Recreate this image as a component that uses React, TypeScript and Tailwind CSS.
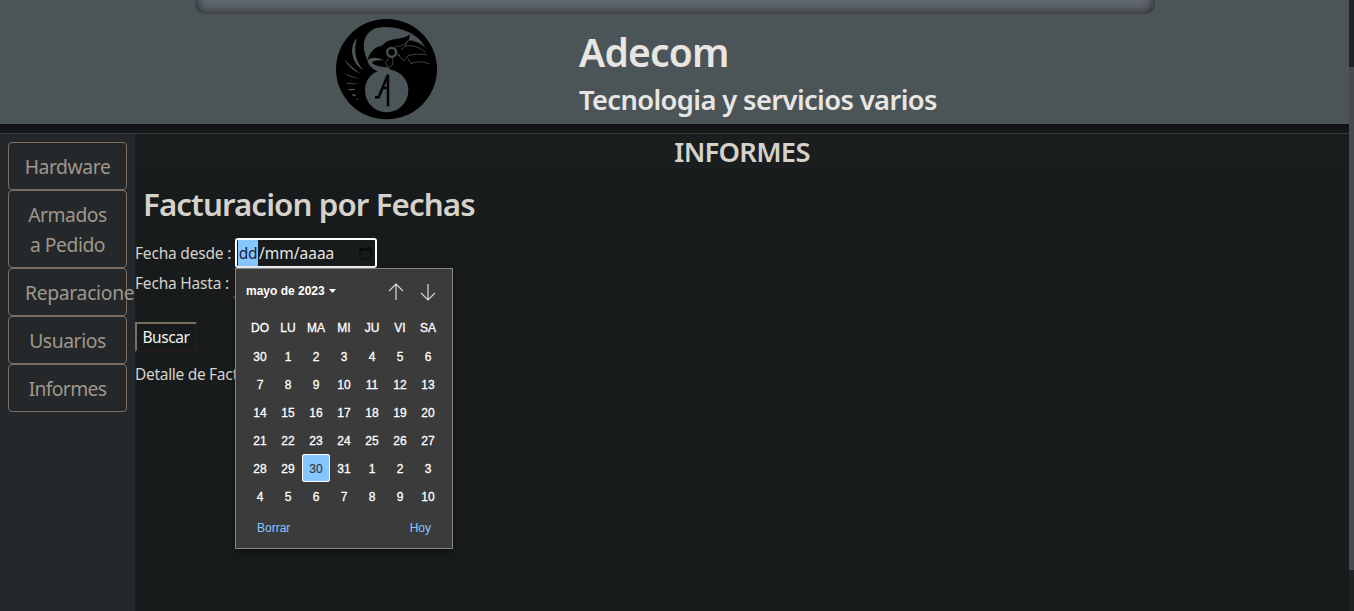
import React from "react";

const days = ["DO", "LU", "MA", "MI", "JU", "VI", "SA"];
const dates = [
  30, 1, 2, 3, 4, 5, 6, 7, 8, 9, 10, 11, 12, 13, 14, 15, 16, 17, 18, 19, 20,
  21, 22, 23, 24, 25, 26, 27, 28, 29, 30, 31, 1, 2, 3, 4, 5, 6, 7, 8, 9, 10,
];
const SELECTED = 30;

function Logo() {
  return (
    <svg viewBox="468 56 303 303" className="h-[101px] w-[101px]" fill="none">
      <ellipse cx="619.500" cy="206.500" rx="151.500" ry="150.500" fill="#000" />
      <g fill="#4b5456">
        <path d="M563 180C540 135 553 92 592 82C638 73 698 91 725 124L737 143C722 128 707 122 686 120L691 102C674 116 642 115 624 122C612 128 611 135 600 138C580 143 568 158 563 180Z" />
        <path d="M562 181C568 170 595 169 611 181C592 178 580 181 576 188C588 197 602 200 624 201L632 208C665 214 685 240 685 270C685 307 656 336 620 336C584 336 555 307 555 270C555 243 571 220 594 213C577 206 566 196 562 181Z" />
        <path d="M531 114C509 135 509 185 550 210C526 182 520 150 531 114Z" />
        <path d="M493 174C498 193 519 211 542 221C526 207 504 194 493 174Z" />
        <path d="M489 216C500 226 516 233 537 235C516 229 500 223 489 216Z" />
        <path d="M496 246C510 250 520 250 535 248C522 253 506 254 496 246Z" />
        <path d="M505 266L525 265L524 270L507 270Z" />
        <path d="M515 285L517 281L529 284L527 288Z" />
        <path d="M528 298L535 292L533 299Z" />
      </g>
      <path d="M576 187C586 184 602 185 614 188C604 198 589 197 576 187Z" fill="#000" />
      <circle cx="635" cy="156" r="13.500" stroke="#4b5456" strokeWidth="7" />
      <g stroke="#4b5456" strokeWidth="2.400">
        <path d="M645 139C665 140 680 129 688 117M682 121L676 138L662 148M676 138C700 132 723 143 737 157M654 163L671 181L684 166C702 160 724 161 741 164M684 174L693 190C710 182 731 184 748 191M646 160L660 166" />
        <path d="M627 173L616 187L625 202L638 194V174" />
      </g>
      <path d="M585 291H596L620 232L624 223V318M607 263H624" stroke="#000" strokeWidth="7.500" />
    </svg>
  );
}

const navButton =
  "flex w-full shrink-0 items-center justify-center rounded-[4px] border border-[#7b6f62] px-4 pt-[2px] text-center text-[19.3px] leading-[30px]";

function Sidebar() {
  return (
    <nav className="flex w-[135px] shrink-0 flex-col overflow-hidden bg-[#24282b] px-2 pt-2 text-[#9f978c]">
      <button className={`${navButton} h-12 tracking-[-0.4px]`}>Hardware</button>
      <button className={`${navButton} h-[78px] tracking-[-0.45px]`}>
        <span>Armados<br />a Pedido</span>
      </button>
      <button className={`${navButton} h-12 justify-start! tracking-[-0.3px]`}>Reparaciones</button>
      <button className={`${navButton} h-12 tracking-[-0.4px]`}>Usuarios</button>
      <button className={`${navButton} h-12 tracking-[-0.65px]`}>Informes</button>
    </nav>
  );
}

function Calendar() {
  return (
    <div className="absolute left-0 top-[30px] z-10 h-[281px] w-[218px] border border-[#858585] bg-[#3b3b3b] font-['Liberation_Sans',sans-serif] text-white shadow-[0_2px_6px_rgba(0,0,0,0.5)]">
      <div className="flex h-[44px] items-center pl-[10px]">
        <span className="w-[79px] whitespace-nowrap text-[12px] font-bold">mayo de 2023</span>
        <svg viewBox="0 0 7 4" className="ml-[4px] h-[4px] w-[7px]" fill="#fff"><path d="M0 0H7L3.500 4Z" /></svg>
        <svg viewBox="0 0 16 18" className="ml-[52px] mt-[2px] h-[18px] w-4" fill="none" stroke="#d8d8d8" strokeWidth="1.200"><path d="M8 17V1M1 8L8 1L15 8" /></svg>
        <svg viewBox="0 0 16 18" className="ml-[16px] mt-[2px] h-[18px] w-4" fill="none" stroke="#d8d8d8" strokeWidth="1.200"><path d="M8 1V17M1 10L8 17L15 10" /></svg>
      </div>
      <div className="ml-[10px] grid w-[196px] grid-cols-7 text-center text-[12px] font-medium">
        {days.map((d) => (
          <span key={d} className="h-[29px] pt-px leading-[29px] [-webkit-text-stroke:0.3px_white]">{d}</span>
        ))}
        {dates.map((d, i) => (
          <span
            key={i}
            className={
              i === SELECTED
                ? "flex h-7 items-center justify-center rounded-[2px] border border-white bg-[#86c6ff] pt-[2px] text-[#3b3b3b] [-webkit-text-stroke:0.2px_#3b3b3b]"
                : "flex h-7 items-center justify-center pt-[2px] [-webkit-text-stroke:0.3px_white]"
            }
          >
            {d}
          </span>
        ))}
      </div>
      <div className="flex h-[34px] items-center justify-between pl-[21px] pr-[21px] pt-[2px] text-[12px] text-[#86c6ff]">
        <span>Borrar</span>
        <span>Hoy</span>
      </div>
    </div>
  );
}

function DateField() {
  return (
    <div className="relative h-[30px] w-[142px]">
      <div className="flex h-[30px] w-[142px] items-center rounded-[3px] border-2 border-white bg-[#181b1c] pl-px text-[#e8e6e3]">
        <span className="h-[26px] w-5 whitespace-nowrap bg-[#86c6ff] text-center text-[15.5px] leading-[26px] tracking-[-0.4px] text-[#16213a]">dd</span>
        <span className="w-[78px] whitespace-nowrap pl-px text-[15.5px] leading-[26px] tracking-[0px]">/mm/aaaa</span>
        <svg viewBox="0 0 13 14" className="ml-[23px] h-[14px] w-[13px]"><path d="M1 3H12V13H1Z" fill="none" stroke="#0b0c0d" strokeWidth="1.200" /><path d="M1 2H12V5H1ZM3 0H4V2H3ZM9 0H10V2H9Z" fill="#0b0c0d" /></svg>
      </div>
      <Calendar />
    </div>
  );
}

export default function App() {
  return (
    <div className="flex h-[611px] w-[1354px] overflow-hidden bg-[#181b1c] font-['Noto_Sans',sans-serif]">
      <div className="flex w-[1349px] shrink-0 flex-col">
        <header className="flex h-[124px] shrink-0 flex-col bg-[#4b5456] text-[#e8e6e3]">
          <div className="mx-auto h-[14px] w-[960px] overflow-hidden">
            <div className="-mt-10 h-[54px] rounded-[10px] bg-[#60676f] shadow-[inset_0_0_12px_1px_#26292b]" />
          </div>
          <div className="flex pl-[336px]">
            <div className="mt-[5px] h-[101px] w-[101px] shrink-0"><Logo /></div>
            <div className="ml-[142px] whitespace-nowrap font-semibold">
              <h1 className="mt-[14px] h-12 text-[39px] leading-[48px] tracking-[-0.8px]">Adecom</h1>
              <h2 className="mt-[7px] text-[27.300px] leading-[34px] tracking-[-0.61px]">Tecnologia y servicios varios</h2>
            </div>
          </div>
        </header>
        <div className="h-[10px] shrink-0 border-b border-[#373b3d] bg-linear-to-b from-[#101213] to-[#181b1c]" />
        <div className="flex min-h-0 flex-1">
          <Sidebar />
          <main className="flex min-w-0 flex-1 flex-col text-[15.5px] text-[#d5d1cb]">
            <h2 className="h-[34px] shrink-0 bg-[#1b1e1f] text-center text-[27.300px] font-semibold leading-[36px] tracking-[-0.7px]">INFORMES</h2>
            <h3 className="ml-2 mt-4 h-10 whitespace-nowrap text-[31.300px] font-semibold leading-[40px] tracking-[-0.92px]">Facturacion por Fechas</h3>
            <div className="mt-[14px] flex h-[30px]">
              <span className="w-[100px] whitespace-nowrap leading-[30px] tracking-[-0.2px]">Fecha desde :</span>
              <DateField />
            </div>
            <div className="flex h-[30px]">
              <span className="w-[97px] whitespace-nowrap leading-[30px] tracking-[-0.2px]">Fecha Hasta :</span>
              <span className="h-[30px] w-[142px] border-2 border-[#241c18] border-b-[#5c534b]" />
            </div>
            <button className="mt-6 h-[30px] w-[62px] border-2 border-b-[#241c18] border-l-[#7b6f62] border-r-[#241c18] border-t-[#7b6f62] text-[15.5px] leading-[26px] tracking-[-0.4px] text-[#f2f0ed]">Buscar</button>
            <p className="mt-[7px] w-[104px] overflow-hidden whitespace-nowrap leading-[30px] tracking-[-0.3px]">Detalle de Fact</p>
          </main>
        </div>
      </div>
      <div className="flex w-[5px] shrink-0 flex-col bg-[#1f2324]">
        <div className="mt-[67px] h-[503px] bg-[#474b4f]" />
      </div>
    </div>
  );
}
